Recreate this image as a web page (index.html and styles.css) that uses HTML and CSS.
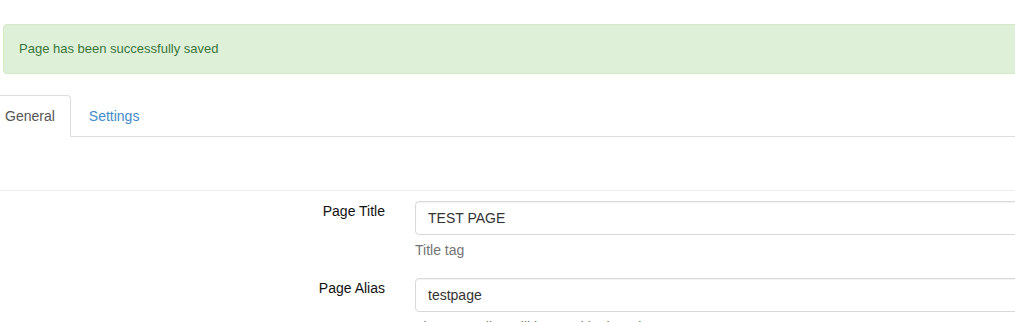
FILE: index.html
```html
<!DOCTYPE html>
<html lang="en">
<head>
    <meta charset="UTF-8">
    <meta name="viewport" content="width=device-width, initial-scale=1.0">
    <title>Edit Page</title>
    <link rel="stylesheet" href="styles.css">
</head>
<body>
<div class="page">
    <div class="alert-success">Page has been successfully saved</div>

    <ul class="nav-tabs">
        <li class="active"><a href="#general">General</a></li>
        <li><a href="#settings">Settings</a></li>
    </ul>

    <div class="tab-content">
        <hr class="divider">
        <form class="form-horizontal">
            <div class="form-group">
                <label class="control-label" for="title">Page Title</label>
                <div class="field">
                    <input class="form-control" id="title" type="text" value="TEST PAGE">
                    <span class="help-block">Title tag</span>
                </div>
            </div>
            <div class="form-group">
                <label class="control-label" for="alias">Page Alias</label>
                <div class="field">
                    <input class="form-control" id="alias" type="text" value="testpage">
                    <span class="help-block">The page alias will be used in the url</span>
                </div>
            </div>
        </form>
    </div>
</div>
</body>
</html>
```

FILE: styles.css
```css
body {
    margin: 0;
    font-family: "Liberation Sans", Arial, sans-serif;
    font-size: 14px;
    line-height: 20px;
    color: #222;
    background-color: #fff;
    overflow: hidden;
}

.page {
    width: 1100px;
    padding-top: 24px;
}

.alert-success {
    margin-left: 3px;
    padding: 15px;
    font-size: 13px;
    line-height: 18px;
    color: #3c763d;
    background-color: #dff0d8;
    border: 1px solid #d6e9c6;
    border-radius: 4px;
}

.nav-tabs {
    display: flex;
    margin: 21px 0 0;
    padding: 0;
    list-style: none;
    border-bottom: 1px solid #ddd;
}

.nav-tabs li {
    margin-right: 2px;
    margin-bottom: -1px;
}

.nav-tabs li:first-child {
    margin-left: -11px;
}

.nav-tabs a {
    display: block;
    padding: 10px 15px;
    color: #428bca;
    text-decoration: none;
    border: 1px solid transparent;
    border-radius: 4px 4px 0 0;
}

.nav-tabs .active a {
    color: #555;
    background-color: #fff;
    border-color: #ddd;
    border-bottom-color: transparent;
}

.tab-content {
    padding-top: 53px;
}

.divider {
    margin: 0 0 10px;
    border: 0;
    border-top: 1px solid #eee;
}

.form-group {
    display: grid;
    grid-template-columns: 400px 1fr;
    margin-bottom: 18px;
}

.control-label {
    padding-right: 15px;
    text-align: right;
    color: #111;
}

.field {
    padding-left: 15px;
}

.form-control {
    display: block;
    box-sizing: border-box;
    width: 100%;
    height: 34px;
    padding: 6px 12px;
    font-family: inherit;
    font-size: 14px;
    line-height: 20px;
    color: #333;
    background-color: #fff;
    border: 1px solid #d9d9d9;
    border-radius: 4px;
    box-shadow: inset 0 1px 1px rgba(0, 0, 0, 0.05);
}

.help-block {
    display: block;
    margin-top: 5px;
    color: #737373;
}
```
